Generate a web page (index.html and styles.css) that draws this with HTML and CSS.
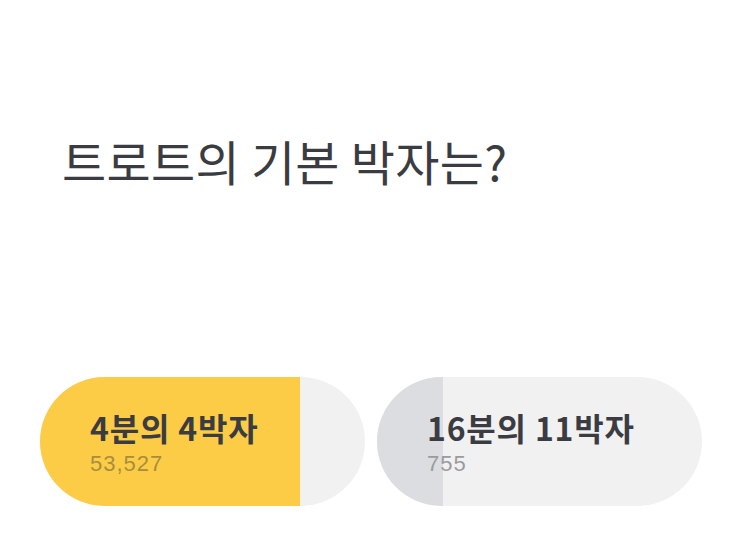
FILE: index.html
```html
<!DOCTYPE html>
<html>
<head>
  <meta charset="utf-8">
  <link rel="stylesheet" href="styles.css">
</head>
<body>
  <div class="quiz">
    <h1 class="question">트로트의 기본 박자는?</h1>

    <div class="options">
      <div class="option picked">
        <div class="fill" style="width: 80%"></div>
        <div class="label">
          <div class="title">4분의 4박자</div>
          <div class="count">53,527</div>
        </div>
      </div>
      <div class="option">
        <div class="fill" style="width: 20.3%"></div>
        <div class="label">
          <div class="title">16분의 11박자</div>
          <div class="count">755</div>
        </div>
      </div>
    </div>
  </div>
</body>
</html>
```

FILE: styles.css
```css
body { margin: 0; background: #fff; font-family: "Noto Sans CJK KR", "Noto Sans", sans-serif; color: #3b3c41; }
.quiz { padding: 0 40px; }
.question { margin: 0; padding: 125px 0 0 22px; font-size: 48px; font-weight: 400; line-height: 70px; letter-spacing: 0.3px; }
.options { display: flex; gap: 12px; margin-top: 182px; }
.option { position: relative; width: 325px; height: 129px; border-radius: 65px; background: #f1f1f2; overflow: hidden; }
.fill { position: absolute; left: 0; top: 0; bottom: 0; background: #dcdde0; }
.picked .fill { background: #fdcc46; }
.label { position: relative; padding: 30px 0 0 50px; }
.title { font-size: 32px; font-weight: 700; line-height: 40px; letter-spacing: 0.8px; }
.count { margin-top: 4px; font-family: "Liberation Sans", sans-serif; font-size: 22px; color: #9b9b9e; line-height: 26px; letter-spacing: 1px; }
.picked .count { color: #a78e3e; }
```
